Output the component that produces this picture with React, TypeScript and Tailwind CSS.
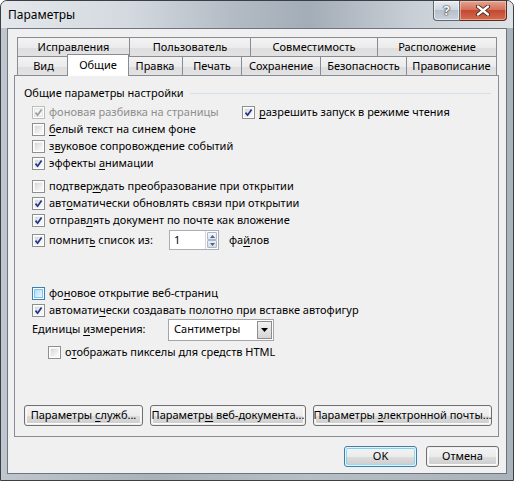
import type { ReactNode } from 'react'

const font = { fontFamily: '"Noto Sans", "Liberation Sans", sans-serif' }

// "&" marks the access key letter, drawn underlined
function Label({ text, disabled = false }: { text: string; disabled?: boolean }) {
  const i = text.indexOf('&')
  const color = disabled ? 'text-[#8d8d8d]' : 'text-black'
  if (i < 0) return <span className={`whitespace-nowrap ${color}`}>{text}</span>
  return (
    <span className={`whitespace-nowrap ${color}`}>
      {text.slice(0, i)}
      <span className="underline underline-offset-2">{text[i + 1]}</span>
      {text.slice(i + 2)}
    </span>
  )
}

function Check({ checked = false, disabled = false, hot = false }: { checked?: boolean; disabled?: boolean; hot?: boolean }) {
  const border = disabled ? 'border-[#bcbcbc]' : hot ? 'border-[#3c7fb1]' : 'border-[#8e8f8f]'
  const inner = disabled
    ? 'bg-[#f4f4f4] border-[#e6e6e6]'
    : hot
      ? 'bg-gradient-to-br from-[#b5dcf5] to-[#eaf6fd] border-[#79c6f9]'
      : 'bg-gradient-to-br from-[#d6d6d6] to-[#fbfbfb] border-[#f4f4f4]'
  return (
    <span className={`relative flex h-[13px] w-[13px] shrink-0 border ${border} bg-white`}>
      <span className={`m-[1px] flex-1 border ${inner}`} />
      {checked && (
        <svg className="absolute inset-0" width="11" height="11" viewBox="0 0 11 11">
          <path d="M2.5 5.6 L4.6 8.2 L8.6 2.4" fill="none" stroke={disabled ? '#9c9c9c' : '#20358a'} strokeWidth="1.7" />
        </svg>
      )}
    </span>
  )
}

function CheckRow({ text, checked, disabled, hot, className = '' }: { text: string; checked?: boolean; disabled?: boolean; hot?: boolean; className?: string }) {
  return (
    <div className={`flex h-[17px] items-center gap-[4px] ${className}`}>
      <Check checked={checked} disabled={disabled} hot={hot} />
      <Label text={text} disabled={disabled} />
    </div>
  )
}

function Button({ children, w, primary = false }: { children: ReactNode; w: string; primary?: boolean }) {
  return (
    <div className={`${w} h-[21px] rounded-[3px] border ${primary ? 'border-[#3c7fb1]' : 'border-[#707070]'} p-px`}>
      <div
        className={`flex h-full items-center justify-center rounded-[2px] border ${primary ? 'border-[#48d6fb]/60' : 'border-white/80'} bg-[linear-gradient(#f2f2f2_0%,#ebebeb_50%,#dddddd_51%,#cfcfcf_100%)]`}
      >
        {children}
      </div>
    </div>
  )
}

const backTabs: [string, number][] = [
  ['Исправления', 112],
  ['Пользователь', 121],
  ['Совместимость', 127],
  ['Расположение', 120],
]

const frontTabs: [string, number][] = [
  ['Вид', 52],
  ['Общие', 58],
  ['Правка', 55],
  ['Печать', 59],
  ['Сохранение', 79],
  ['Безопасность', 86],
  ['Правописание', 91],
]

function Tab({ label, width, selected = false }: { label: string; width: number; selected?: boolean }) {
  if (selected) {
    return (
      <div
        className="relative z-10 -mx-[2px] -mt-[2px] flex h-[22px] items-center justify-center border border-b-0 border-[#898c95] bg-white pb-[1px]"
        style={{ width: width + 4 }}
      >
        {label}
      </div>
    )
  }
  return (
    <div
      className="flex h-[20px] items-center justify-center border border-b-0 border-r-0 border-[#898c95] bg-[linear-gradient(#f3f3f3,#ebebeb_50%,#dedede_51%,#e3e3e3)] last:border-r"
      style={{ width }}
    >
      {label}
    </div>
  )
}

function SpinBox() {
  return (
    <div className="flex h-[20px] w-[50px] border border-[#abadb3] bg-white">
      <div className="flex flex-1 items-center pl-[4px]">1</div>
      <div className="flex w-[13px] flex-col border-l border-[#d6d6d6] p-px">
        <div className="flex flex-1 items-center justify-center rounded-[1px] border border-[#a9b7c9] bg-gradient-to-b from-[#f3f6fb] to-[#dce5f0]">
          <svg width="5" height="3" viewBox="0 0 5 3">
            <path d="M0 3 L2.5 0 L5 3 Z" fill="#4d6185" />
          </svg>
        </div>
        <div className="flex flex-1 items-center justify-center rounded-[1px] border border-[#a9b7c9] bg-gradient-to-b from-[#e9eef5] to-[#d1dce9]">
          <svg width="5" height="3" viewBox="0 0 5 3">
            <path d="M0 0 L2.5 3 L5 0 Z" fill="#4d6185" />
          </svg>
        </div>
      </div>
    </div>
  )
}

function Select() {
  return (
    <div className="flex h-[22px] w-[106px] items-center border border-[#a5a5a5] bg-white p-px">
      <div className="flex-1 pl-[4px]">Сантиметры</div>
      <div className="flex h-full w-[15px] items-center justify-center border border-[#8d8d8d] bg-gradient-to-b from-[#f2f2f2] to-[#d5d5d5]">
        <svg width="7" height="4" viewBox="0 0 7 4">
          <path d="M0 0 L7 0 L3.5 4 Z" fill="#000" />
        </svg>
      </div>
    </div>
  )
}

function CaptionButtons() {
  return (
    <div className="flex self-start">
      <div className="flex h-[20px] w-[27px] items-center justify-center rounded-bl-[4px] border border-t-0 border-[#5f666e] bg-[linear-gradient(#e9edf1,#cfd6dd_45%,#b6c0ca_50%,#c9d2da)] shadow-[inset_0_0_0_1px_rgba(255,255,255,0.55)]">
        <span className="text-[13px] font-bold leading-none text-white [text-shadow:0_0_1px_#000,0_0_2px_#2a2a2a]">?</span>
      </div>
      <div className="flex h-[20px] w-[47px] items-center justify-center rounded-br-[4px] border border-l-0 border-t-0 border-[#5a2a20] bg-[linear-gradient(#e6a28f,#d4725c_45%,#c24a32_50%,#d56a4e)] shadow-[inset_0_0_0_1px_rgba(255,220,200,0.5)]">
        <svg width="14" height="11" viewBox="0 0 14 11">
          <path d="M2 1.5 L12 9.5 M12 1.5 L2 9.5" stroke="#3a1a12" strokeWidth="4" strokeLinecap="round" />
          <path d="M2 1.5 L12 9.5 M12 1.5 L2 9.5" stroke="#fff" strokeWidth="2.4" strokeLinecap="round" />
        </svg>
      </div>
    </div>
  )
}

export default function App() {
  return (
    <div
      className="flex h-[481px] w-[514px] flex-col rounded-t-[7px] border border-[#3b3f44] bg-[linear-gradient(90deg,#bfc6cd,#a9b1b9_30%,#b6bec6_60%,#aab2ba)] text-[11px] text-black"
      style={font}
    >
      <div className="flex h-[27px] items-center justify-between rounded-t-[6px] bg-[linear-gradient(90deg,#e4e8ec,#d3d9df_25%,#b3bcc5_45%,#a3adb7_60%,#c7ced5_80%,#dde2e6)] pl-[7px] pr-[6px]">
        <span className="text-[12px]">Параметры</span>
        <CaptionButtons />
      </div>

      <div className="mx-[6px] mb-[6px] flex flex-1 flex-col border border-[#6d7680] bg-[#f0f0f0]">
        <div className="ml-[9px] mt-[8px] flex flex-col">
          <div className="flex">
            {backTabs.map(([t, w]) => (
              <Tab key={t} label={t} width={w} />
            ))}
          </div>
          <div className="-mt-[1px] flex h-[20px] items-end">
            {frontTabs.map(([t, w]) => (
              <Tab key={t} label={t} width={w} selected={t === 'Общие'} />
            ))}
          </div>
        </div>

        <div className="-mt-[1px] ml-[6px] flex h-[362px] w-[485px] flex-col border border-[#898c95] bg-[#f0f0f0]">
          <div className="ml-[9px] mt-[9px] flex h-[17px] items-center">
            <span className="whitespace-nowrap">Общие параметры настройки</span>
            <div className="ml-[6px] mr-[7px] flex-1 border-t border-[#d5dfe5]" />
          </div>

          <div className="ml-[17px] mt-[2px] flex flex-col">
            <div className="flex">
              <CheckRow text="фоновая разбивка на страницы" checked disabled className="w-[210px]" />
              <CheckRow text="&разрешить запуск в режиме чтения" checked />
            </div>
            <CheckRow text="&белый текст на синем фоне" />
            <CheckRow text="з&вуковое сопровождение событий" />
            <CheckRow text="эффекты &анимации" checked />

            <CheckRow text="подтвер&ждать преобразование при открытии" className="mt-[6px]" />
            <CheckRow text="авт&оматически обновлять связи при открытии" checked />
            <CheckRow text="отправ&лять документ по почте как вложение" checked />
            <div className="mt-[1px] flex h-[20px] items-center">
              <div className="flex w-[137px] items-center gap-[4px]">
                <Check checked />
                <Label text="помнит&ь список из:" />
              </div>
              <SpinBox />
              <span className="ml-[10px]">
                <Label text="фа&йлов" />
              </span>
            </div>

            <CheckRow text="фо&новое открытие веб-страниц" hot className="mt-[35px]" />
            <CheckRow text="автомати&чески создавать полотно при вставке автофигур" checked />
            <div className="flex h-[21px] items-center">
              <span className="w-[136px]">
                <Label text="Единицы &измерения:" />
              </span>
              <Select />
            </div>
            <CheckRow text="о&тображать пикселы для средств HTML" className="ml-[16px] mt-[4px]" />
          </div>

          <div className="mb-[10px] ml-[9px] mt-auto flex gap-[7px]">
            <Button w="w-[119px]">
              <Label text="Параметры &служб..." />
            </Button>
            <Button w="w-[156px]">
              <Label text="Параметр&ы веб-документа..." />
            </Button>
            <Button w="w-[179px]">
              <Label text="Параметры &электронной почты..." />
            </Button>
          </div>
        </div>

        <div className="mr-[7px] mt-[9px] flex justify-end gap-[9px]">
          <Button w="w-[73px]" primary>
            OK
          </Button>
          <Button w="w-[73px]">Отмена</Button>
        </div>
      </div>
    </div>
  )
}
